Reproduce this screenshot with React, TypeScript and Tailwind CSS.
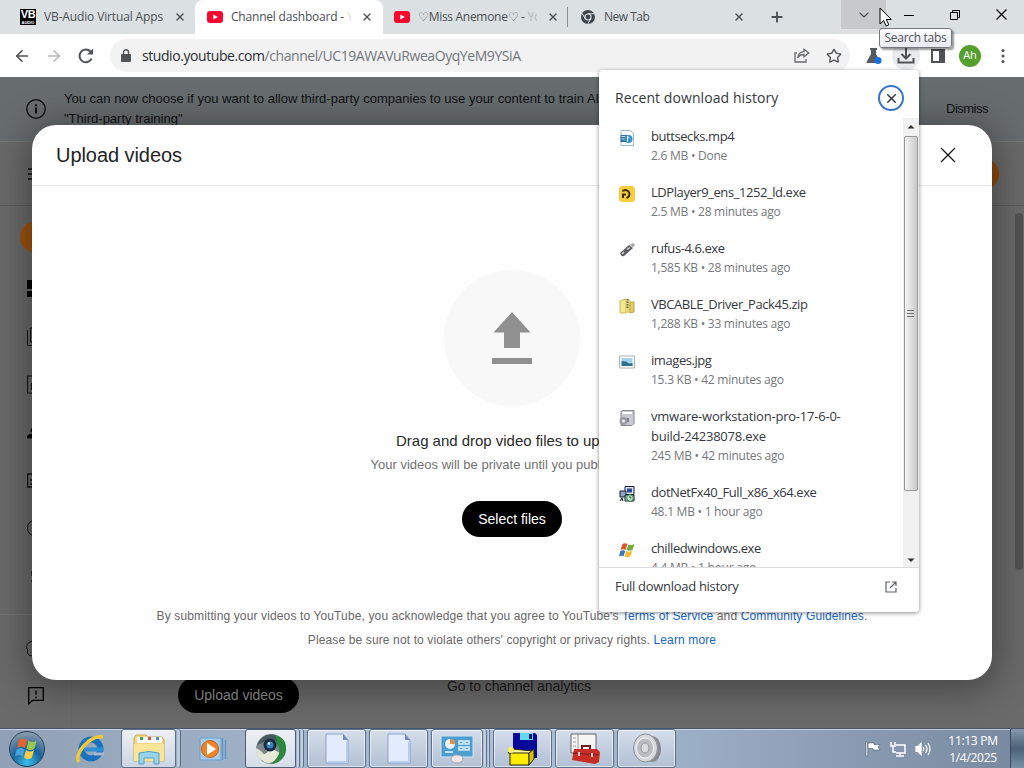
import React from "react";
import { ArrowLeft, ArrowRight, Star, X, Plus, ChevronDown } from "lucide-react";

const ui = "font-['Open_Sans','Noto_Sans',sans-serif]";
const arial = "font-['Liberation_Sans',Arial,sans-serif]";

function YouTubeIcon() {
  return (
    <svg width="16" height="12" viewBox="0 0 16 12" className="shrink-0">
      <rect width="16" height="12" rx="3" fill="#f8082f" />
      <path d="M6.3 3.4v5.2L10.8 6z" fill="#fff" />
    </svg>
  );
}

function VbIcon() {
  return (
    <div className={`flex h-4 w-4 shrink-0 flex-col items-center overflow-hidden bg-black text-white ${arial}`}>
      <span className="text-[11px] leading-[11px] font-bold tracking-[-0.5px]">VB</span>
      <span className="mt-px text-[4px] leading-[4px] font-bold">AUDIO</span>
    </div>
  );
}

function ChromeIcon() {
  return (
    <svg width="14" height="14" viewBox="0 0 14 14" className="shrink-0">
      <circle cx="7" cy="7" r="7" fill="#3f464b" />
      <path d="M7 3.7h6.2M4.2 8.7 1.1 3.3M9.8 8.7l-3 5.2" stroke="#dbe1e3" strokeWidth="1" />
      <circle cx="7" cy="7" r="3.6" fill="#dbe1e3" />
      <circle cx="7" cy="7" r="2.4" fill="#3f464b" />
    </svg>
  );
}

function TabStrip() {
  return (
    <div className="flex h-[34px] shrink-0 bg-[#dbe0e3] text-[12px] text-[#4b5054]">
      <div className="flex w-[195px] items-center pl-5">
        <VbIcon />
        <span className="ml-2 w-[124px] whitespace-nowrap tracking-[-0.14px]">VB-Audio Virtual Apps</span>
        <X size={12} strokeWidth={2.8} className="ml-[6px]" />
      </div>
      <div className="flex w-[188px] items-center rounded-t-lg bg-white pl-3">
        <YouTubeIcon />
        <span className="ml-2 w-[120px] overflow-hidden whitespace-nowrap tracking-[-0.2px]">
          Channel dashboard - <span className="text-[#ddd]">Y</span>
        </span>
        <X size={12} strokeWidth={2.8} className="ml-[10px]" />
      </div>
      <div className="flex w-[186px] items-center pl-[11px]">
        <YouTubeIcon />
        <span className="ml-2 w-[119px] overflow-hidden whitespace-nowrap tracking-[-0.300px]">
          ♡Miss Anemone♡ - <span className="text-[#b5babd]">Yo</span>
        </span>
        <X size={12} strokeWidth={2.8} className="ml-[10px]" />
        <span className="ml-[8px] h-5 w-px bg-[#888e92]" />
      </div>
      <div className="flex w-[184px] items-center pl-[12px]">
        <ChromeIcon />
        <span className="ml-[9px] w-[120px] tracking-[-0.500px]">New Tab</span>
        <X size={12} strokeWidth={2.8} className="ml-[9px]" />
      </div>
      <div className="flex w-[88px] items-center pl-4">
        <Plus size={16} strokeWidth={2.8} />
      </div>
      <div className="flex h-[29px] w-[45px] items-center justify-center bg-[#c6cacd]">
        <ChevronDown size={16} strokeWidth={1.7} />
      </div>
      <div className="flex h-[29px] w-[46px] items-center justify-center text-black">
        <svg width="10" height="10">
          <path d="M0 5.500h10" stroke="#000" strokeWidth="1" />
        </svg>
      </div>
      <div className="flex h-[29px] w-[46px] items-center justify-center">
        <svg width="10" height="10" fill="none" stroke="#000">
          <path d="M.5 2.5h7v7h-7zM2.5 2.5v-2h7v7h-2" />
        </svg>
      </div>
      <div className="flex h-[29px] w-[46px] items-center justify-center">
        <svg width="11" height="11" fill="none" stroke="#000" strokeWidth="1.2">
          <path d="M.5.5l10 10M10.500.5l-10 10" />
        </svg>
      </div>
    </div>
  );
}

function Toolbar() {
  return (
    <div className="flex h-[43px] shrink-0 items-center bg-white text-[#505356]">
      <div className="flex w-[110px] items-center gap-[14px] pl-[13px]">
        <ArrowLeft size={18} strokeWidth={2.3} />
        <ArrowRight size={18} strokeWidth={2.3} className="text-[#b9bbbd]" />
        <svg width="18" height="18" viewBox="0 0 24 24" fill="none" stroke="currentColor" strokeWidth="2.7">
          <path d="M19.500 15.500A8.500 8.500 0 1 1 18 6l2.500 2.500" />
          <path d="M21.500 2v8h-8z" fill="currentColor" stroke="none" />
        </svg>
      </div>
      <div className="flex h-[33px] w-[740px] items-center rounded-full bg-[#f2f2f3] pr-2 pl-[11px]">
        <svg width="10" height="13" viewBox="0 0 10 13">
          <rect y="5" width="10" height="8" rx="1" fill="#505356" />
          <path d="M2.500 5V3.200a2.500 2.500 0 0 1 5 0V5" fill="none" stroke="#505356" strokeWidth="1.400" />
        </svg>
        <span className="ml-[11px] flex-1 text-[14px] tracking-[-0.430px] whitespace-nowrap text-[#72767a]">
          <span className="text-[#2b2e31]">studio.youtube.com</span>/channel/UC19AWAVuRweaOyqYeM9YSiA
        </span>
        <svg width="16" height="15" viewBox="0 0 16 15" fill="none" stroke="#66696c" strokeWidth="1.300">
          <path d="M3 5H1v9h11v-3M10 1.300 14.800 5 10 8.800V6.500C7 6.500 5 7.500 3.800 10 4 6.500 6 3.800 10 3.600z" />
        </svg>
        <Star size={16} strokeWidth={2} className="ml-[16px]" />
      </div>
      <div className="flex flex-1 items-center pl-4">
        <svg width="16" height="16" viewBox="0 0 16 16" className="shrink-0">
          <path d="M4 0h7v2h-1v4l4.500 8q.5 1-1 1H1.500q-1.500 0-1-1L5 6V2H4z" fill="#555a5e" />
          <circle cx="12" cy="12.500" r="3.500" fill="#1a6fe0" />
        </svg>
        <div className="ml-[10px] flex h-7 w-7 shrink-0 items-center justify-center rounded-full bg-[#e8eaec]">
          <svg width="18" height="16" viewBox="0 0 18 16" fill="none" stroke="#505356" strokeWidth="2">
            <path d="M9 0v10M4.500 6 9 10.500 13.500 6M1.500 10v4.500h15V10" />
          </svg>
        </div>
        <svg width="14" height="14" className="ml-[11px] shrink-0">
          <path d="M1 1h12v12H1z" fill="none" stroke="#505356" strokeWidth="2" />
          <path d="M8 1h5v12H8z" fill="#505356" />
        </svg>
        <div className="ml-[14px] flex h-[22px] w-[22px] shrink-0 items-center justify-center rounded-full bg-[#559f2e] text-[11px] text-white">
          Ah
        </div>
        <svg width="4" height="16" className="ml-[20px] shrink-0" fill="#505356">
          <circle cx="2" cy="2.500" r="1.500" />
          <circle cx="2" cy="8" r="1.500" />
          <circle cx="2" cy="13.500" r="1.500" />
        </svg>
      </div>
    </div>
  );
}

const sidebarIcons: React.ReactNode[] = [
  <path d="M0 1h8v9H0zM0 12h8v6H0zM10 1h8v6h-8zM10 9h8v9h-8z" fill="#000" stroke="none" />,
  <path d="M.5 3v15.500H14M3.500 1h13v14h-13z" />,
  <path d="M.5 1h17v17H.5zM4.500 8v7M9 5v9M13 9v5" strokeWidth="1.200" />,
  <path d="M0 15c0-3 3-4 5-4v4zM4 6l2-1v3l-2 1zM9 15v-4h8v4z" fill="#000" />,
  <path d="M.5 3h17v13H.500zM3 9h2M3 13h2M8 9h6M8 13h6" strokeWidth="1.500" />,
  <circle cx="9" cy="9" r="8.500" />,
  <path d="M5 4v5M4 14h2M9 1v17" strokeWidth="1.200" />,
];

function StudioPage() {
  return (
    <div className={`relative flex min-h-0 flex-1 flex-col overflow-hidden bg-[#6a6a6a] ${arial}`}>
      <div className="flex h-[65px] shrink-0 items-center border-b border-[#737779] bg-[#676c6e] pl-[26px] text-[13px] text-[#101213]">
        <svg width="20" height="20" viewBox="0 0 20 20" fill="none" stroke="#0c0c0c" strokeWidth="1.300">
          <circle cx="10" cy="10" r="9.300" />
          <path d="M10 8.500v6M10 5.300v1.900" strokeWidth="1.900" />
        </svg>
        <p className="ml-[18px] w-[882px] leading-5 tracking-[0.010px] whitespace-nowrap">
          You can now choose if you want to allow third-party companies to use your content to train AI
          <br />
          "Third-party training"
        </p>
        <span className="tracking-[-0.500px]">Dismiss</span>
      </div>
      <div className="flex h-[64px] shrink-0 items-center justify-between border-b border-[#5c5c5c] pr-[25px] pl-7">
        <svg width="18" height="12" stroke="#111" strokeWidth="1.500">
          <path d="M0 1h18M0 6h18M0 11h18" />
        </svg>
        <div className="h-8 w-8 rounded-full bg-[#8d490f]" />
      </div>
      <div className="flex min-h-0 flex-1">
        <aside className="flex w-[72px] flex-col border-r border-[#666]">
          <div className="mt-[15px] ml-5 h-8 w-8 rounded-full bg-[#9c5410]" />
          <div className="mt-[26px] flex flex-col gap-[29px] pl-[27px]">
            {sidebarIcons.map((icon, i) => (
              <svg key={i} width="19" height="19" viewBox="0 0 19 19" fill="none" stroke="#151515">
                {icon}
              </svg>
            ))}
          </div>
          <div className="mt-[28px] border-t border-[#767676]" />
          <svg width="18" height="18" viewBox="0 0 18 18" fill="none" stroke="#151515" className="mt-[25px] ml-[26px]">
            <path d="M4 2c3-2 4-1 5 0 4-2 8 1 6 5 3 6-2 10-6 7-5 4-9 0-7-4-3-2-1-7 2-8z" />
          </svg>
          <svg width="16" height="18" viewBox="0 0 16 18" fill="none" stroke="#000" strokeWidth="1.300" className="mt-[29px] ml-7">
            <path d="M.700 17V.700h14.600v12.600H4.500zM8 3.500v4.300M8 9.500v1.800" />
          </svg>
        </aside>
        <div className="flex flex-1 items-end pb-[15px] pl-[106px]">
          <div className="flex h-9 w-[121px] items-center justify-center rounded-full bg-black text-[14px] text-[#8d8d8d]">
            Upload videos
          </div>
          <span className="mb-[16px] ml-[148px] text-[14px] tracking-[-0.070px] text-[#1c1c1c]">Go to channel analytics</span>
        </div>
        <div className="mr-px mt-[7px] h-[357px] w-2 rounded bg-[#525252]" />
      </div>
    </div>
  );
}

function UploadDialog() {
  return (
    <div className={`absolute top-[125px] left-8 flex h-[555px] w-[960px] flex-col rounded-[24px] bg-[#fefefe] shadow-[0_4px_36px_6px_rgba(0,0,0,0.35)] ${arial}`}>
      <div className="flex h-[61px] shrink-0 items-center justify-between border-b border-[#e5e5e5] px-6 pr-9">
        <h1 className="text-[20px] tracking-[-0.060px] text-[#242424]">Upload videos</h1>
        <svg width="16" height="16" stroke="#111" strokeWidth="1.200">
          <path d="M1 1l14 14M15 1 1 15" />
        </svg>
      </div>
      <div className="flex flex-1 flex-col items-center pt-[84px]">
        <div className="flex h-[136px] w-[136px] items-center justify-center rounded-full bg-[#f8f8f8]">
          <svg width="40" height="52" viewBox="0 0 40 52" fill="#909090">
            <path d="M20 0 38.500 20.500H28V36H12V20.500H1.500zM0 46h40v6H0z" />
          </svg>
        </div>
        <p className="mt-[25px] text-[15px] leading-5 tracking-[-0.020px] text-[#2a2a2a]">Drag and drop video files to upload</p>
        <p className="mt-[4px] text-[13px] leading-5 text-[#727272]">Your videos will be private until you publish them.</p>
        <button className="mt-[26px] h-9 w-[100px] rounded-full bg-black text-[14px] text-white">Select files</button>
        <div className="mt-[67px] text-center text-[12px] leading-6 tracking-[0.128px] whitespace-nowrap text-[#686868]">
          <p>
            By submitting your videos to YouTube, you acknowledge that you agree to YouTube's{" "}
            <span className="text-[#1967c5]">Terms of Service</span> and <span className="text-[#1967c5]">Community Guidelines</span>.
          </p>
          <p>
            Please be sure not to violate others' copyright or privacy rights. <span className="text-[#1967c5]">Learn more</span>
          </p>
        </div>
      </div>
    </div>
  );
}

const downloads: { name: string; info: string; icon: React.ReactNode; tall?: boolean }[] = [
  {
    name: "buttsecks.mp4",
    info: "2.6 MB • Done",
    icon: (
      <>
        <path d="M2 .5h9l3.500 3v12H2z" fill="#f8fbff" stroke="#a5b6c4" />
        <path d="M1.500 5h8v7h-8z" fill="#356f9f" />
        <path d="M2.500 6.500h5M2.500 9h4" stroke="#cde4f6" />
        <circle cx="9.500" cy="9" r="4" fill="#3791cf" />
        <path d="M8.500 11.500v-5l2 1.500" fill="none" stroke="#fff" />
      </>
    ),
  },
  {
    name: "LDPlayer9_ens_1252_ld.exe",
    info: "2.5 MB • 28 minutes ago",
    icon: (
      <>
        <rect width="16" height="16" rx="3.500" fill="#f6cd3f" />
        <path d="M4 5.500V5a4 4 0 1 1 3.500 7M4 12V8.500h3" fill="none" stroke="#3d2c14" strokeWidth="2" />
      </>
    ),
  },
  {
    name: "rufus-4.6.exe",
    info: "1,585 KB • 28 minutes ago",
    icon: (
      <>
        <path d="M1 11 10 3l4 3-9 8q-3 1-4-3z" fill="#5b5d60" />
        <path d="M11 2.500 14 1l2 2-2 2.500z" fill="#a5a9ad" />
        <path d="M3 12l2-2M8 7.500l3-2" stroke="#d4d4d4" strokeWidth="1.500" />
      </>
    ),
  },
  {
    name: "VBCABLE_Driver_Pack45.zip",
    info: "1,288 KB • 33 minutes ago",
    icon: (
      <>
        <path d="M1 3l6-2v14H1z" fill="#f5e98f" stroke="#cab956" />
        <path d="M7 1h4v14H7z" fill="#e2d480" />
        <path d="M11 4h4v10l-4 1z" fill="#e0d057" stroke="#b6a74e" />
        <path d="M8.500 1v10" stroke="#77754f" strokeWidth="2" strokeDasharray="1.500 1" />
      </>
    ),
  },
  {
    name: "images.jpg",
    info: "15.3 KB • 42 minutes ago",
    icon: (
      <>
        <path d="M.5 2h15v12H.5z" fill="#fff" stroke="#a4b3bf" />
        <path d="M2.500 4h11v8h-11z" fill="#a4d3ee" />
        <path d="M2.500 7q5 0 6 1.500t5 .5v3h-11z" fill="#2c728e" />
      </>
    ),
  },
  {
    name: "vmware-workstation-pro-17-6-0-build-24238078.exe",
    info: "245 MB • 42 minutes ago",
    tall: true,
    icon: (
      <>
        <path d="M2 1.500 4 .5h11v13l-2 2H2z" fill="#c9c9d2" stroke="#85868f" />
        <path d="M3 3h10" stroke="#fff" strokeWidth="2" />
        <circle cx="4.500" cy="11" r="4" fill="#9a9ba5" />
        <circle cx="4.500" cy="11" r="1.500" fill="#e9e9ef" />
        <path d="M9 8v4" stroke="#666879" strokeWidth="1.500" />
      </>
    ),
  },
  {
    name: "dotNetFx40_Full_x86_x64.exe",
    info: "48.1 MB • 1 hour ago",
    icon: (
      <>
        <path d="M6 .5h9v8H6z" fill="#dbe2f0" stroke="#181b26" />
        <path d="M8 2.500h5v4H8z" fill="#2547a5" />
        <path d="M1 5h6v6H1z" fill="#8fa5ce" stroke="#181b26" />
        <path d="M1 15l2-3 1 3M6 9h9v6H6z" fill="#bcd" stroke="#181b26" />
        <circle cx="11" cy="12" r="3.300" fill="#cdecd2" stroke="#23854a" />
        <path d="M11 10v2h1.500" stroke="#184b2c" fill="none" />
      </>
    ),
  },
  {
    name: "chilledwindows.exe",
    info: "4.4 MB • 1 hour ago",
    icon: (
      <>
        <path d="M3.500 2Q6 .5 8.500 2L6.500 8Q4 6.500 1.500 8z" fill="#d9552b" />
        <path d="M9.500 2.500q3 1 6-.5L13.500 8q-3 1.500-6 0z" fill="#73ab3c" />
        <path d="M1.300 9q2.500-1.500 5 0l-2 5.500Q2 13 0 14.500z" fill="#3b74c2" />
        <path d="M7.300 9q3 1.500 6 0l-2 5.500q-3 1.500-6 0z" fill="#f0bc31" />
      </>
    ),
  },
];

function DownloadPopup() {
  return (
    <div className="absolute top-[70px] left-[599px] flex h-[542px] w-[320px] flex-col rounded-[4px] bg-white text-[#35383c] shadow-[0_1px_4px_rgba(0,0,0,0.45)]">
      <div className="flex h-[48px] shrink-0 items-center justify-between pt-2 pr-[15px] pl-4">
        <h2 className="mb-[2px] text-[14px] tracking-[0.080px]">Recent download history</h2>
        <div className="flex h-[26px] w-[26px] items-center justify-center rounded-full border-2 border-[#3973cc]">
          <X size={15} strokeWidth={2.4} />
        </div>
      </div>
      <div className="flex min-h-0 flex-1">
        <div className="flex-1 overflow-hidden">
          {downloads.map((d) => (
            <div key={d.name} className="flex py-2 pl-5">
              <svg width="16" height="16" viewBox="0 0 16 16" className="mt-1 shrink-0">
                {d.icon}
              </svg>
              <div className="ml-4 w-[205px]">
                <p className={`text-[13px] leading-5 ${d.tall ? "tracking-[-0.220px]" : "tracking-[-0.430px]"}`}>{d.name}</p>
                <p className="text-[12px] leading-5 tracking-[-0.250px] text-[#74787c]">{d.info}</p>
              </div>
            </div>
          ))}
        </div>
        <div className="flex w-[16px] flex-col items-center bg-[#f1f1f1]">
          <svg width="8" height="18" fill="#333">
            <path d="M.5 10.500 4 7l3.500 3.500z" />
          </svg>
          <div className="flex h-[355px] w-[14px] items-center justify-center rounded-[2px] border border-[#979797] bg-linear-to-r from-[#f4f4f4] to-[#c9c9cb]">
            <svg width="8" height="8" stroke="#707070">
              <path d="M0 .5h7M0 3.500h7M0 6.500h7" />
            </svg>
          </div>
          <svg width="8" height="16" fill="#333" className="mt-auto">
            <path d="M.5 7.500 4 11l3.500-3.500z" />
          </svg>
        </div>
      </div>
      <div className="flex h-[45px] shrink-0 items-center justify-between border-t border-[#dadcde] pr-[22px] pb-[7px] pl-4">
        <span className="text-[13px] tracking-[-0.300px]">Full download history</span>
        <svg width="12" height="12" fill="none" stroke="#5f6367" strokeWidth="1.200">
          <path d="M5 1H1v10h10V7M7 1h4v4M11 1 5 7" />
        </svg>
      </div>
    </div>
  );
}

function PageFile() {
  return (
    <svg width="26" height="32" viewBox="0 0 26 32">
      <path d="M2 1h17l5 6v23H2z" fill="#e3edfd" stroke="#8ba1cf" />
      <path d="M19 1v6h5z" fill="#7589c4" />
      <path d="M4 29h19V9" fill="none" stroke="#b8caee" strokeWidth="2" />
    </svg>
  );
}

function TaskButton({ children, stacked }: { children: React.ReactNode; stacked?: boolean }) {
  return (
    <div className="flex w-[59px] shrink-0 gap-px">
      <div className="flex flex-1 items-center justify-center rounded-[3px] border border-[#5c6f88] bg-linear-to-b from-[#d5deea] to-[#b2c0d4] shadow-[inset_0_0_0_1px_rgba(255,255,255,0.6)]">
        {children}
      </div>
      {stacked && <div className="w-[3px] rounded-r border-r border-[#5c6f88] bg-[#c4d0e0]" />}
      {stacked && <div className="w-[2px] rounded-r border-r border-[#5c6f88] bg-[#c4d0e0]" />}
    </div>
  );
}

function StartOrb() {
  return (
    <svg width="38" height="38" viewBox="0 0 38 38">
      <defs>
        <radialGradient id="orb" cx="50%" cy="90%" r="85%">
          <stop offset="0" stopColor="#39c0e8" />
          <stop offset=".5" stopColor="#1a639c" />
          <stop offset="1" stopColor="#8799a9" />
        </radialGradient>
      </defs>
      <circle cx="19" cy="19" r="17.500" fill="url(#orb)" stroke="#29425d" />
      <path d="M11 10q4-3 8 0l-2 8q-4-3-8 0z" fill="#e7622c" />
      <path d="M20.500 10.500q4 3 8 0l-2 8q-4 3-8 0z" fill="#98c94b" />
      <path d="M8.700 19.500q4-3 8 0l-2 7q-4-3-8 0z" fill="#45a2dc" />
      <path d="M18 20q4 3 8 0l-2 7.500q-4 3-8 0z" fill="#f9cd45" />
    </svg>
  );
}

function Taskbar() {
  return (
    <div className="flex h-10 shrink-0 border-t border-[#46566c] bg-linear-to-r from-[#91a0b4] via-[#adc2da] via-50% to-[#78899f] shadow-[inset_0_1px_0_rgba(255,255,255,0.5)]">
      <div className="flex w-[60px] items-center pl-2">
        <StartOrb />
      </div>
      <div className="flex w-[61px] items-center justify-center">
        <svg width="32" height="32" viewBox="0 0 32 32" fill="none">
          <circle cx="16" cy="16" r="9.500" stroke="#1972bd" strokeWidth="6" />
          <path d="M9 16.500h19" stroke="#2c8ed5" strokeWidth="4" />
          <path d="M19 19.500h10v3H19z" fill="#a9bbd0" />
          <path d="M4 29C-2 22 15 1 28 4" stroke="#f2c83a" strokeWidth="3.500" />
        </svg>
      </div>
      <div className="flex w-[60px] shrink-0 gap-px">
        <div className="flex w-[55px] items-center justify-center rounded-[3px] border border-[#5c6f88] bg-linear-to-b from-[#edf0f5] to-[#cbd5e3]">
          <svg width="34" height="32" viewBox="0 0 34 32">
            <path d="M2 5 4 2h10l2 2h14l2 3v21H2z" fill="#f2d980" stroke="#c9a952" />
            <path d="M5 4h25v6H5z" fill="#fff" />
            <path d="M8 4h3v3H8z" fill="#38a150" />
            <path d="M16 4h3v3h-3z" fill="#d34f42" />
            <path d="M24 4h3v3h-3z" fill="#448bd0" />
            <path d="M2 11h30v17H2z" fill="#f8e597" />
            <path d="M7 31V20q10-3 20 0v11h-5v-6H12v6z" fill="#96d4ec" stroke="#599fc1" />
          </svg>
        </div>
        <div className="w-[4px] rounded-r border-r border-[#5c6f88] bg-[#bccbdc]" />
      </div>
      <div className="flex w-[64px] items-center justify-center">
        <svg width="28" height="26" viewBox="0 0 28 26">
          <path d="M1 2h21v22H1z" fill="#a3c9e8" stroke="#6fa3cb" />
          <path d="M23.500 2v22M26.500 4v19" stroke="#6098c5" strokeWidth="1.500" />
          <circle cx="11" cy="13" r="8.500" fill="#ee8425" stroke="#c9631e" />
          <path d="M8 7v12l9-6z" fill="#fff" />
        </svg>
      </div>
      <div className="mr-[3px] flex w-[59px] gap-px">
        <div className="flex w-[51px] items-center justify-center rounded-[3px] border border-[#4c5d74] bg-linear-to-b from-[#edf0f5] to-[#d5dde8]">
          <svg width="32" height="32" viewBox="0 0 32 32">
            <circle cx="16" cy="16" r="15" fill="#7c8788" />
            <path d="M1 15q7 3 9 9l-3 4Q0 23 1 15z" fill="#dfe2d5" />
            <path d="M3 22q12 0 11-8l11 6q-5 13-16 9z" fill="#e6e8da" />
            <path d="M20 2q12 3 11 15-2 12-15 14 14-12 5-21z" fill="#2a8a3c" />
            <path d="M2 12Q8-1 20 2l2 6-9-1z" fill="#46595f" />
            <circle cx="15" cy="12" r="6.500" fill="#172c44" />
            <circle cx="15" cy="12" r="3.500" fill="#3c83b5" />
            <circle cx="14" cy="10.500" r="1.300" fill="#dff2fc" />
          </svg>
        </div>
        <div className="w-[3px] rounded-r border-r border-[#5c6f88] bg-[#c4d0e0]" />
        <div className="w-[3px] rounded-r border-r border-[#5c6f88] bg-[#c4d0e0]" />
      </div>
      <div className="flex flex-1 gap-[3px]">
        <TaskButton>
          <PageFile />
        </TaskButton>
        <TaskButton>
          <PageFile />
        </TaskButton>
        <TaskButton stacked>
          <svg width="34" height="30" viewBox="0 0 34 30">
            <path d="M1 2h32v21H1z" fill="#4d9dd1" stroke="#d0e4f3" />
            <circle cx="10" cy="10" r="5" fill="#e8f2f8" />
            <path d="M10 10V5a5 5 0 0 1 5 5z" fill="#ef8d36" />
            <path d="M19 7h4v3h-4zM25 7h4v3h-4zM19 13h4v3h-4zM25 13h4v3h-4zM5 18h8" fill="none" stroke="#e1f1fb" strokeWidth="1.500" />
            <ellipse cx="17" cy="25" rx="6" ry="4" fill="#eee6e4" stroke="#a7a7b3" />
          </svg>
        </TaskButton>
        <TaskButton>
          <svg width="32" height="34" viewBox="0 0 32 34">
            <path d="M6 1h22l2 2v23H6z" fill="#09089b" />
            <path d="M13 1h13v7H13z" fill="#61d9ee" />
            <path d="M22 2h3v5h-3z" fill="#061169" />
            <path d="M1 21 5 17l21 2-4 4z" fill="#fff9a5" stroke="#28260b" />
            <path d="M3 21h19v12H3z" fill="#ffed00" stroke="#28260b" />
            <path d="M22 21l5-4v10l-5 6z" fill="#d6c300" stroke="#28260b" />
            <circle cx="4" cy="18" r="3" fill="#fff05a" />
          </svg>
        </TaskButton>
        <TaskButton>
          <svg width="32" height="34" viewBox="0 0 32 34">
            <path d="M2 2h25v19H2z" fill="#f5f5f3" stroke="#60656b" />
            <path d="M4 6h3M4 10h3M4 14h3M9 2v18" stroke="#969ba2" />
            <path d="M13 17v-3h8v3" fill="none" stroke="#6e1b1b" strokeWidth="2" />
            <path d="M5 17h23l3 3-1 10-4 2L3 28z" fill="#c52f27" />
            <path d="M4 21l26 2" stroke="#7e1d1b" />
            <path d="M10 20v4M23 21v4" stroke="#e8cac5" strokeWidth="2" />
          </svg>
        </TaskButton>
        <TaskButton>
          <svg width="32" height="32" viewBox="0 0 32 32">
            <ellipse cx="21" cy="16" rx="9" ry="13" fill="#868a90" />
            <ellipse cx="14.500" cy="15" rx="12" ry="14" fill="#d6d9dd" stroke="#8c9096" />
            <ellipse cx="14" cy="15" rx="8.500" ry="10" fill="#b9bdc1" stroke="#f4f4f4" />
            <ellipse cx="14" cy="15" rx="4" ry="5" fill="#d8dadc" stroke="#94989e" />
          </svg>
        </TaskButton>
      </div>
      <div className="flex items-center text-white">
        <svg width="16" height="16" viewBox="0 0 16 16" fill="#fff" stroke="#39475a" strokeWidth=".5">
          <path d="M1 1h1.700v14H1zM3 2h6v1.500h6L13 6l2 3H8V7.500H3z" />
        </svg>
        <svg width="16" height="16" viewBox="0 0 16 16" fill="none" stroke="#fff" strokeWidth="1.500" className="ml-[9px]">
          <path d="M6 4h9v8H6M10 12v2M6 15h8M1 1v4h4V1M3 5v6h3" />
        </svg>
        <svg width="16" height="16" viewBox="0 0 16 16" fill="none" stroke="#fff" strokeWidth="1.200" className="ml-[9px]">
          <path d="M1 5.500h2l3-3v11l-3-3H1z" fill="#fff" />
          <path d="M8 6q1.500 2 0 4M10.500 4q3 4 0 8M13 2q4 6 0 12" />
        </svg>
        <div className="ml-[12px] w-[60px] text-center text-[12px] leading-[17px] tracking-[-0.300px] whitespace-nowrap">
          <p>11:13 PM</p>
          <p>1/4/2025</p>
        </div>
        <div className="ml-[7px] h-full w-[14px] border-l border-[#3d4b5c] bg-linear-to-b from-[#8798aa] via-[#4c6177] to-[#7a91a7]" />
      </div>
    </div>
  );
}

export default function App() {
  return (
    <div className={`relative flex h-[768px] w-[1024px] flex-col overflow-hidden bg-white ${ui}`}>
      <TabStrip />
      <Toolbar />
      <div className="flex min-h-0 flex-1 flex-col overflow-hidden">
        <StudioPage />
      </div>
      <UploadDialog />
      <DownloadPopup />
      <div className="relative z-10 flex h-10 shrink-0 flex-col">
        <Taskbar />
      </div>
      <div className="absolute top-[28px] left-[879px] flex h-5 w-[73px] items-center justify-center rounded-[3px] border border-[#75777b] bg-linear-to-b from-white to-[#e8e9f3] text-[12px] tracking-[-0.300px] whitespace-nowrap text-[#515257] shadow-[2px_2px_2px_rgba(0,0,0,0.4)]">
        Search tabs
      </div>
      <svg width="14" height="21" viewBox="0 0 14 21" className="absolute top-[7px] left-[879px]">
        <path d="M1 1v16l3.700-3.500L7.200 19l2.600-1.200-2.500-5.300h5z" fill="#fff" stroke="#000" />
      </svg>
    </div>
  );
}
